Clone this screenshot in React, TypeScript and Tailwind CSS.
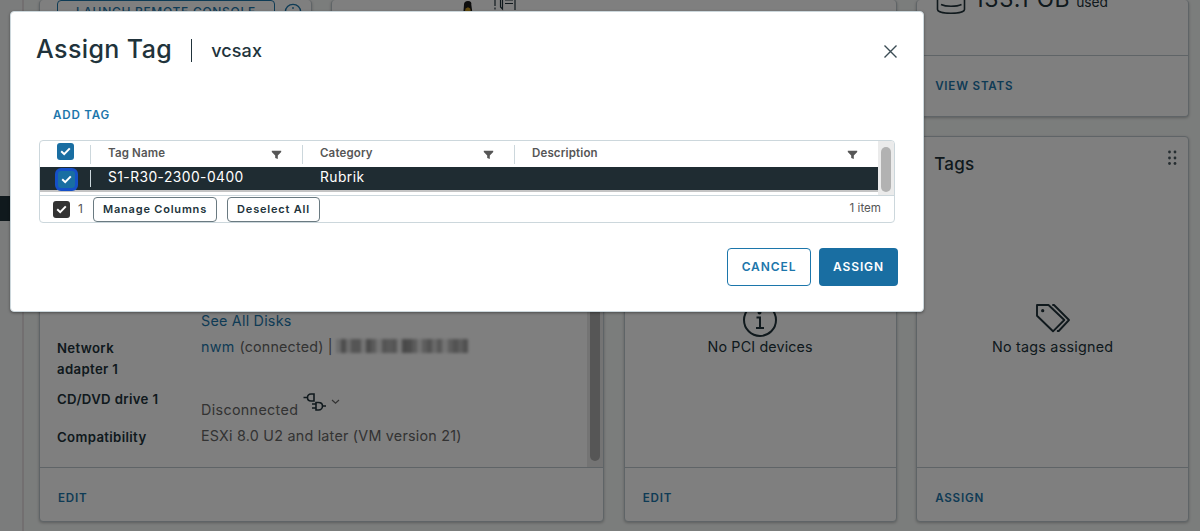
import type { ReactNode } from "react"

const link = "text-[#1c76ab] font-semibold text-[11.6px] leading-4 tracking-[0.8px]"

function Card({
  children,
  footer,
  footerClass = "h-[54px] pt-[6px]",
  className = "",
}: {
  children?: ReactNode
  footer?: string
  footerClass?: string
  className?: string
}) {
  return (
    <div
      className={`flex flex-col rounded-[4px] border border-[#bfc9ce] bg-white shadow-[0_1px_3px_rgba(0,0,0,0.25)] ${className}`}
    >
      <div className="relative flex min-h-0 flex-1 flex-col">{children}</div>
      {footer && (
        <div className={`flex shrink-0 items-center border-t border-[#bfc9ce] px-[18px] ${footerClass}`}>
          <span className={link}>{footer}</span>
        </div>
      )}
    </div>
  )
}

function Checkbox({ className = "bg-[#196ea2]" }: { className?: string }) {
  return (
    <span className={`flex h-[17px] w-[17px] shrink-0 items-center justify-center rounded-[3px] ${className}`}>
      <svg width="11" height="9" viewBox="0 0 11 9" fill="none" stroke="#fff" strokeWidth="2">
        <path d="M1.2 4.2 4.2 7.1 9.8 1.4" />
      </svg>
    </span>
  )
}

function Filter() {
  return (
    <svg width="11" height="10" viewBox="0 0 11 10" fill="#565656">
      <path d="M.8.8h9.400v1.200L6.800 5.400V9L4.200 8V5.400L.8 2z" />
    </svg>
  )
}

function Linux() {
  return (
    <svg width="10" height="13" viewBox="0 0 10 13">
      <path d="M.3 13 1 4.500Q1 1 5 1T8.300 4.500L9.400 13z" fill="#1a1a1a" />
      <path d="M2.600 8.600 5 7.200l2.200 1.400.5 2.400H2z" fill="#c79820" />
    </svg>
  )
}

function GuestOs() {
  return (
    <svg width="22" height="11" viewBox="0 0 22 11" fill="none" stroke="#21333b" strokeWidth="1.2">
      <path d="M1 0v6M1 7.500v2M6.500 0v7l2 2V0M11 0h8M11 3.500h8M21 0v10" />
    </svg>
  )
}

function Disk() {
  return (
    <svg width="30" height="26" viewBox="0 0 30 26" fill="none" stroke="#21333b" strokeWidth="1.6">
      <path d="M1.500 0v21.500c0 2.200 6 3.800 13.500 3.800s13.500-1.600 13.500-3.800V0M5 16.500c2.500 1.200 6 1.800 10 1.800s8-.6 10.500-1.800" />
    </svg>
  )
}

function Info() {
  return (
    <svg width="36" height="36" viewBox="0 0 36 36" fill="none" stroke="#21333b" strokeWidth="2">
      <circle cx="18" cy="18" r="16" />
      <path d="M14.500 15.500h3.500v10.500M14 26h8" />
      <circle cx="17.500" cy="10.500" r="1" fill="#21333b" />
    </svg>
  )
}

function TagsIcon() {
  return (
    <svg
      width="36"
      height="30"
      viewBox="0 0 36 30"
      fill="none"
      stroke="#21333b"
      strokeWidth="1.900"
      strokeLinejoin="round"
      strokeLinecap="round"
    >
      <path d="M2 2h11.500L29.300 17 18 28.300 2 12.800z" />
      <path d="M18 2h1l15 15-10.300 11h-1" />
      <circle cx="7.700" cy="7.700" r=".7" fill="#21333b" />
    </svg>
  )
}

function Plug() {
  return (
    <svg width="24" height="20" viewBox="0 0 24 20" fill="none" stroke="#21333b" strokeWidth="1.600">
      <path d="M.5 5.500h4M11 2H8C5.800 2 4.500 3.500 4.500 5.500S5.800 9 8 9h3zM9 12h4M9 16h4M13 10.500h2.500c2.500 0 4 1.500 4 3.500s-1.500 4-4 4H13zM19.500 14H23" />
    </svg>
  )
}

function Row({ label, children, className = "" }: { label: string; children?: ReactNode; className?: string }) {
  return (
    <div className={`flex ${className}`}>
      <div className="w-[144px] shrink-0 text-[13.200px] leading-[21px] font-semibold tracking-[0.35px] text-[#21333b]">
        <div className="max-w-[106px]">{label}</div>
      </div>
      <div className="flex text-[14.3px] leading-[21px] tracking-[0.24px] whitespace-nowrap text-[#666]">{children}</div>
    </div>
  )
}

const macBlocks = [30, 84, 30, 70, 70, 18, 86, 62, 18, 70, 62, 70, 10, 90, 84, 60, 18, 56, 74, 36, 66, 18, 56, 74, 56, 78]

const columns = [
  { name: "Tag Name", width: "w-[212px]" },
  { name: "Category", width: "w-[212px]" },
  { name: "Description", width: "flex-1" },
]

function Dashboard() {
  return (
    <div className="flex h-full">
      <div className="h-full w-[24px] border-r-2 border-[#e4dfe0] bg-[#f7f9f8]">
        <div className="mt-[196px] h-[25px] bg-[#21333b]" />
      </div>
      <div className="grid flex-1 grid-cols-4 grid-rows-[117px_386px] gap-x-[19.5px] gap-y-[19px] bg-[#f7faf9] pr-[11px] pl-[15px]">
        <Card className="border-t-0">
          <div className="flex gap-[9px] pl-[17px]">
            <div className="h-[26px] w-[218px] rounded-[4px] border border-[#1c76ab] text-center text-[12px] leading-[22px] font-medium tracking-[0.7px] text-[#1c76ab]">
              LAUNCH REMOTE CONSOLE
            </div>
            <svg width="18" height="22" viewBox="0 0 18 22" fill="none" stroke="#1c76ab" strokeWidth="1.300">
              <circle cx="9" cy="12" r="7.700" />
              <path d="M9 7v2M9 11v5" />
            </svg>
          </div>
        </Card>
        <Card className="col-span-2 border-t-0">
          <div className="flex gap-[21px] pl-[131px]">
            <Linux />
            <GuestOs />
          </div>
        </Card>
        <Card className="border-t-0" footer="VIEW STATS" footerClass="h-[61px]">
          <div className="-mt-[12px] flex pl-[19px] text-[#21333b]">
            <Disk />
            <span className="ml-[8px] w-[94px] text-[23px] leading-[22px] tracking-[0.8px] whitespace-nowrap">133.1 GB</span>
            <span className="ml-[8px] pt-[1px] text-[13.800px] leading-[26px]">used</span>
          </div>
        </Card>

        <Card className="col-span-2" footer="EDIT">
          <div className="flex flex-1 justify-between pl-[17px]">
            <div className="pt-[173px]">
              <Row label="">
                <span className="text-[#1c76ab]">See All Disks</span>
              </Row>
              <Row label="Network adapter 1" className="mt-[7px]">
                <div className="-mt-[2px] flex">
                  <span className="text-[#1c76ab]">nwm</span>
                  <span className="ml-[5px] tracking-[0.2px]">(connected) |</span>
                  <span className="mt-[3px] ml-[3px] grid h-[14px] w-[132px] grid-cols-[repeat(26,1fr)] blur-[1.5px]">
                    {macBlocks.map((v, i) => (
                      <span key={i} className="bg-black" style={{ opacity: v / 210 }} />
                    ))}
                  </span>
                </div>
              </Row>
              <Row label="CD/DVD drive 1" className="mt-[9px]">
                <span className="mt-[10px] w-[97px] tracking-[0.35px]">Disconnected</span>
                <span className="mt-[3px] ml-[5px]">
                  <Plug />
                </span>
                <svg className="ml-[4px]" width="9" height="20" viewBox="0 0 9 20" fill="none" stroke="#666" strokeWidth="1.200">
                  <path d="M1 11l3.500 3.200L8 11" />
                </svg>
              </Row>
              <Row label="Compatibility" className="mt-[7px]">
                <span className="-mt-[2px]">ESXi 8.0 U2 and later (VM version 21)</span>
              </Row>
            </div>
            <div className="w-[16px] bg-[#e8e8e8] px-[3px] pb-[6px]">
              <div className="h-full rounded-full bg-[#adadad]" />
            </div>
          </div>
        </Card>
        <Card footer="EDIT">
          <div className="flex flex-col items-center pt-[165px] text-[14.3px] tracking-[0.15px] text-[#21333b]">
            <Info />
            <span className="-mt-[2px] leading-[21px]">No PCI devices</span>
          </div>
        </Card>
        <Card footer="ASSIGN">
          <div className="flex h-[54px] justify-between px-[17px] pt-[13px] text-[#21333b]">
            <span className="text-[17px] leading-[29px] font-medium tracking-[0.3px]">Tags</span>
            <svg className="-mr-[6px]" width="10" height="16" viewBox="0 0 10 16" fill="#4d5c63">
              {[2, 8, 13.5].map((y) => (
                <g key={y}>
                  <circle cx="2.500" cy={y} r="1.400" />
                  <circle cx="8" cy={y} r="1.400" />
                </g>
              ))}
            </svg>
          </div>
          <div className="flex flex-col items-center pt-[112px] text-[14.3px] tracking-[0.25px] text-[#21333b]">
            <TagsIcon />
            <span className="mt-[3px] leading-[21px]">No tags assigned</span>
          </div>
        </Card>
      </div>
    </div>
  )
}

function AssignTagDialog() {
  return (
    <div className="flex h-[301px] w-[914px] flex-col rounded-[4px] border border-[#ccd7dc] bg-white pr-[25px] pl-[25px] shadow-[0_1px_3px_rgba(0,0,0,0.4)]">
      <div className="mt-[20px] flex h-[36px] items-center text-[#21333b]">
        <h1 className="text-[25px] font-medium tracking-[0.4px]">Assign Tag</h1>
        <span className="mr-[19px] ml-[19px] h-[23px] w-px bg-[#21333b]" />
        <h2 className="text-[18px] font-medium tracking-[0.1px]">vcsax</h2>
        <svg className="mt-[2px] mr-[1px] ml-auto" width="13" height="13" viewBox="0 0 13 13" fill="none" stroke="#3b4c54" strokeWidth="1.400">
          <path d="M.5.5l12 12M12.500.5l-12 12" />
        </svg>
      </div>

      <button className={`mt-[39px] ml-[17px] self-start ${link}`}>ADD TAG</button>

      <div className="mt-[17px] ml-[3px] flex h-[83px] w-[856px] flex-col rounded-[4px] border border-[#ccd7dc] text-[#565656]">
        <div className="flex h-[55px] border-b border-[#ccd7dc]">
          <div className="flex-1">
            <div className="flex h-[26px] items-center text-[11.500px] font-semibold tracking-[0.15px]">
              <div className="flex w-[50px] justify-end pb-[5px] pr-[16px]">
                <Checkbox />
              </div>
              {columns.map((c) => (
                <div
                  key={c.name}
                  className={`flex h-[19px] items-center justify-between border-l border-[#ccd7dc] pr-[20px] pl-[17px] ${c.width}`}
                >
                  <span>{c.name}</span>
                  <span className="mt-[2px]">
                    <Filter />
                  </span>
                </div>
              ))}
            </div>
            <div className="flex h-[25px] items-center border-b-2 border-[#c4c4c4] bg-[#1f2c32] text-[13.800px] tracking-[0.45px] text-white">
              <div className="flex w-[50px] justify-end pr-[15px] pt-[1px]">
                <Checkbox className="bg-[#196ea2] ring-3 ring-[#1550c8]" />
              </div>
              <div className="h-[17px] w-[212px] border-l border-[#ccd7dc] pl-[17px] leading-[14px]">S1-R30-2300-0400</div>
              <div className="h-[17px] pl-[18px] leading-[14px]">Rubrik</div>
            </div>
          </div>
          <div className="w-[16px] rounded-tr-[3px] bg-[#ebebeb] px-[3px] pt-[6px] pb-[3px]">
            <div className="h-full rounded-full bg-[#b2b2b2]" />
          </div>
        </div>
        <div className="flex h-[26px] items-center pr-[13px] pl-[13px] text-[12px]">
          <Checkbox className="bg-[#333]" />
          <span className="ml-[8px] w-[15px]">1</span>
          <button className="h-[25px] w-[124px] rounded-[4px] border border-[#6a7a81] text-[11px] leading-[22px] font-semibold tracking-[0.8px] text-[#21333b]">
            Manage Columns
          </button>
          <button className="ml-[10px] h-[25px] w-[93px] rounded-[4px] border border-[#6a7a81] text-[11px] leading-[22px] font-semibold tracking-[0.8px] text-[#21333b]">
            Deselect All
          </button>
          <span className="ml-auto text-[11.600px]">1 item</span>
        </div>
      </div>

      <div className="mt-[25px] flex justify-end gap-[8px] text-[12px] font-semibold tracking-[0.9px]">
        <button className="h-[38px] w-[84px] rounded-[4px] border border-[#1c76ab] text-[#1c76ab]">CANCEL</button>
        <button className="h-[38px] w-[79px] rounded-[4px] bg-[#196ea2] text-white">ASSIGN</button>
      </div>
    </div>
  )
}

export default function App() {
  return (
    <div className="relative h-[531px] w-[1200px] overflow-hidden bg-white font-['Inter',sans-serif]">
      <Dashboard />
      <div className="absolute inset-0 bg-black/50 pt-[11px] pl-[10px]">
        <AssignTagDialog />
      </div>
    </div>
  )
}
